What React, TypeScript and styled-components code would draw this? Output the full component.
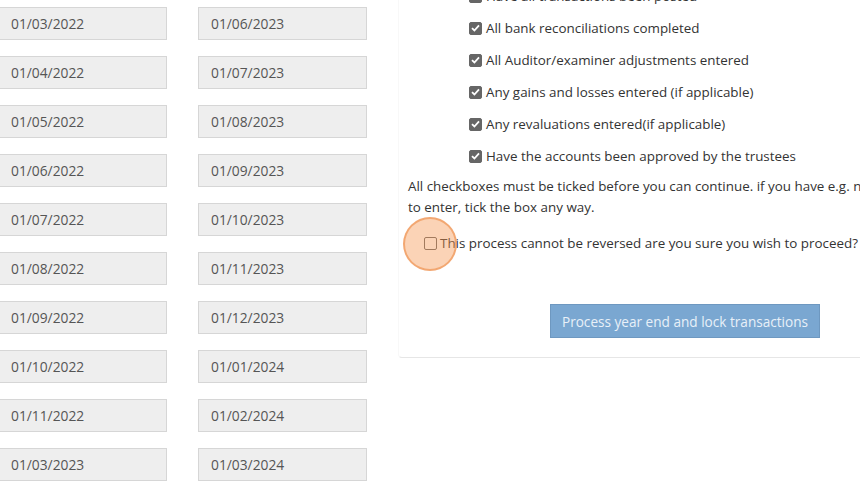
import React from "react";
import styled, { createGlobalStyle } from "styled-components";

const GlobalStyle = createGlobalStyle`
  html, body {
    margin: 0;
    padding: 0;
    background: #fff;
    overflow: hidden;
  }
  body {
    font-family: "Open Sans", "Liberation Sans", sans-serif;
    font-size: 14px;
    color: #333;
  }
`;

const leftDates = [
  "01/03/2022",
  "01/04/2022",
  "01/05/2022",
  "01/06/2022",
  "01/07/2022",
  "01/08/2022",
  "01/09/2022",
  "01/10/2022",
  "01/11/2022",
  "01/03/2023",
];

const rightDates = [
  "01/06/2023",
  "01/07/2023",
  "01/08/2023",
  "01/09/2023",
  "01/10/2023",
  "01/11/2023",
  "01/12/2023",
  "01/01/2024",
  "01/02/2024",
  "01/03/2024",
];

const checks = [
  "Have all transactions been posted",
  "All bank reconciliations completed",
  "All Auditor/examiner adjustments entered",
  "Any gains and losses entered (if applicable)",
  "Any revaluations entered(if applicable)",
  "Have the accounts been approved by the trustees",
];

const Page = styled.div`
  display: flex;
  align-items: flex-start;
  width: 860px;
  height: 481px;
  overflow: hidden;
`;

const DateGrid = styled.div`
  display: grid;
  grid-template-columns: 169px 169px;
  column-gap: 31px;
  row-gap: 16px;
  padding-top: 7px;
  margin-left: -2px;
  flex: none;
`;

const DateInput = styled.input`
  box-sizing: border-box;
  width: 169px;
  height: 33px;
  padding: 0 12px;
  border: 1px solid #d6d6d6;
  background: #eeeeee;
  color: #555;
  font-family: "Open Sans", "Liberation Sans", sans-serif;
  font-size: 13.8px;
  outline: none;
`;

const Panel = styled.div`
  position: relative;
  margin-left: 31px;
  margin-top: -20px;
  width: 600px;
  flex: none;
  padding: 0 0 19px 9px;
  border-bottom: 1px solid #e6e6e6;
  border-left: 1px solid #f8f8f8;
  border-bottom-left-radius: 4px;
  font-size: 13.4px;
`;

const CheckList = styled.div`
  display: flex;
  flex-direction: column;
  margin-left: 61px;
`;

const CheckRow = styled.div`
  display: flex;
  align-items: center;
  height: 32px;
  gap: 4px;
  color: #333;
  white-space: nowrap;
`;

const Box = styled.span<{ $checked?: boolean }>`
  box-sizing: border-box;
  display: inline-flex;
  align-items: center;
  justify-content: center;
  width: 13px;
  height: 13px;
  border-radius: 2px;
  flex: none;
  background: ${(p) => (p.$checked ? "#666" : "#fff")};
  border: 1px solid #666;
`;

const Note = styled.p`
  margin: 4px 0 0;
  line-height: 21px;
  color: #333;
  white-space: nowrap;
`;

const ConfirmRow = styled.div`
  position: relative;
  display: flex;
  align-items: center;
  gap: 3px;
  height: 20px;
  margin-top: 15px;
  margin-left: 16px;
  white-space: nowrap;
  color: #333;
`;

const Spot = styled.span`
  position: absolute;
  left: -21px;
  top: -16px;
  width: 50px;
  height: 50px;
  border-radius: 50%;
  background: rgba(246, 150, 80, 0.42);
  border: 2px solid rgba(240, 150, 85, 0.7);
  pointer-events: none;
`;

const ButtonRow = styled.div`
  display: flex;
  margin-top: 51px;
  margin-left: 142px;
`;

const Button = styled.button`
  box-sizing: border-box;
  width: 270px;
  height: 34px;
  background: #7aa7d1;
  border: 1px solid #6e98c0;
  color: #e8f0f8;
  font-family: "Open Sans", "Liberation Sans", sans-serif;
  font-size: 13.6px;
  cursor: pointer;
`;

const Tick = () => (
  <svg width="9" height="8" viewBox="0 0 9 8">
    <path d="M1 4.2 L3.4 6.5 L8 1.3" fill="none" stroke="#fff" strokeWidth="1.8" />
  </svg>
);

export default function App() {
  return (
    <>
      <GlobalStyle />
      <Page>
        <DateGrid>
          {leftDates.map((d, i) => (
            <React.Fragment key={i}>
              <DateInput readOnly value={d} />
              <DateInput readOnly value={rightDates[i]} />
            </React.Fragment>
          ))}
        </DateGrid>
        <Panel>
          <CheckList>
            {checks.map((c) => (
              <CheckRow key={c}>
                <Box $checked>
                  <Tick />
                </Box>
                {c}
              </CheckRow>
            ))}
          </CheckList>
          <Note>
            All checkboxes must be ticked before you can continue. if you have e.g. no revaluations
            <br />
            to enter, tick the box any way.
          </Note>
          <ConfirmRow>
            <Box />
            This process cannot be reversed are you sure you wish to proceed?
            <Spot />
          </ConfirmRow>
          <ButtonRow>
            <Button>Process year end and lock transactions</Button>
          </ButtonRow>
        </Panel>
      </Page>
    </>
  );
}
